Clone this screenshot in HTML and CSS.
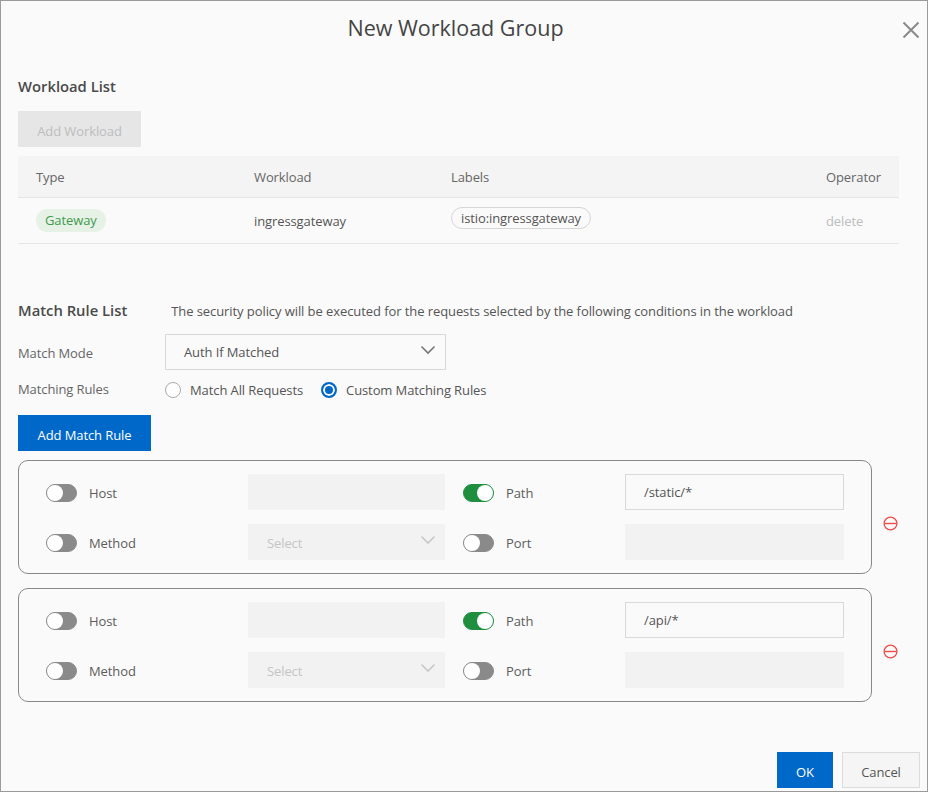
FILE: index.html
```html
<!DOCTYPE html>
<html lang="en">
<head>
    <meta charset="UTF-8">
    <title>New Workload Group</title>
    <link rel="stylesheet" href="styles.css">
</head>
<body>
    <div class="dialog">
        <div class="dialog-header">
            <div class="dialog-title">New Workload Group</div>
            <svg class="close-icon" width="18" height="18" viewBox="0 0 18 18"><path d="M1.5 1.5L16.5 16.5M16.5 1.5L1.5 16.5" stroke="#8a8a8a" stroke-width="2" fill="none"/></svg>
        </div>

        <div class="section-title workload-title">Workload List</div>
        <button class="btn btn-disabled add-workload">Add Workload</button>

        <div class="table-row table-head">
            <div>Type</div>
            <div>Workload</div>
            <div>Labels</div>
            <div>Operator</div>
        </div>
        <div class="table-row table-body">
            <div><span class="tag-green">Gateway</span></div>
            <div>ingressgateway</div>
            <div><span class="tag-label">istio:ingressgateway</span></div>
            <div class="delete-link">delete</div>
        </div>

        <div class="match-head">
            <div class="section-title">Match Rule List</div>
            <div class="match-desc">The security policy will be executed for the requests selected by the following conditions in the workload</div>
        </div>

        <div class="form-row mode-row">
            <div class="form-label">Match Mode</div>
            <div class="field select-field mode-select">
                <span>Auth If Matched</span>
                <svg class="chevron" width="16" height="10" viewBox="0 0 16 10"><path d="M1.5 1.5L8 8L14.5 1.5" stroke="#777" stroke-width="1.6" fill="none"/></svg>
            </div>
        </div>

        <div class="form-row radio-row">
            <div class="form-label">Matching Rules</div>
            <div class="radio-item"><span class="radio"></span>Match All Requests</div>
            <div class="radio-item"><span class="radio radio-on"></span>Custom Matching Rules</div>
        </div>

        <button class="btn btn-primary add-rule">Add Match Rule</button>

        <div class="rule-wrap">
            <div class="rule-card">
                <div class="rule-cell"><span class="toggle"></span>Host</div>
                <div class="field field-off"></div>
                <div class="rule-cell"><span class="toggle toggle-on"></span>Path</div>
                <div class="field">/static/*</div>
                <div class="rule-cell"><span class="toggle"></span>Method</div>
                <div class="field field-off select-field">
                    <span>Select</span>
                    <svg class="chevron" width="16" height="10" viewBox="0 0 16 10"><path d="M1.5 1.5L8 8L14.5 1.5" stroke="#c8c8c8" stroke-width="1.6" fill="none"/></svg>
                </div>
                <div class="rule-cell"><span class="toggle"></span>Port</div>
                <div class="field field-off"></div>
            </div>
            <svg class="remove-icon" width="15" height="15" viewBox="0 0 15 15"><circle cx="7.5" cy="7.5" r="6.4" stroke="#f04a4a" stroke-width="1.3" fill="none"/><path d="M1.5 7.5H13.5" stroke="#f04a4a" stroke-width="1.4"/></svg>
        </div>

        <div class="rule-wrap">
            <div class="rule-card">
                <div class="rule-cell"><span class="toggle"></span>Host</div>
                <div class="field field-off"></div>
                <div class="rule-cell"><span class="toggle toggle-on"></span>Path</div>
                <div class="field">/api/*</div>
                <div class="rule-cell"><span class="toggle"></span>Method</div>
                <div class="field field-off select-field">
                    <span>Select</span>
                    <svg class="chevron" width="16" height="10" viewBox="0 0 16 10"><path d="M1.5 1.5L8 8L14.5 1.5" stroke="#c8c8c8" stroke-width="1.6" fill="none"/></svg>
                </div>
                <div class="rule-cell"><span class="toggle"></span>Port</div>
                <div class="field field-off"></div>
            </div>
            <svg class="remove-icon" width="15" height="15" viewBox="0 0 15 15"><circle cx="7.5" cy="7.5" r="6.4" stroke="#f04a4a" stroke-width="1.3" fill="none"/><path d="M1.5 7.5H13.5" stroke="#f04a4a" stroke-width="1.4"/></svg>
        </div>

        <div class="dialog-footer">
            <button class="btn btn-primary btn-ok">OK</button>
            <button class="btn btn-cancel">Cancel</button>
        </div>
    </div>
</body>
</html>
```
FILE: styles.css
```css
html, body {
    margin: 0;
    padding: 0;
}

body {
    font-family: "Open Sans", "Noto Sans", sans-serif;
    font-size: 13px;
    letter-spacing: -0.1px;
    color: #555;
    background-color: #fafafa;
}

.dialog {
    box-sizing: border-box;
    width: 928px;
    height: 792px;
    padding: 0 7px 0 17px;
    background-color: #fafafa;
    border: 1px solid #9a9a9a;
    display: flex;
    flex-direction: column;
    align-items: flex-start;
    overflow: hidden;
}

.dialog-header {
    position: relative;
    width: 909px;
    height: 54px;
    margin-left: -17px;
    text-align: center;
}

.dialog-title {
    font-size: 21.5px;
    line-height: 54px;
    letter-spacing: 0;
    color: #444;
}

.close-icon {
    position: absolute;
    top: 20px;
    right: -10px;
}

.section-title {
    font-size: 14.8px;
    font-weight: 600;
    letter-spacing: 0;
    color: #4a4a4a;
}

.workload-title {
    margin-top: 20px;
    line-height: 22px;
}

.btn {
    box-sizing: border-box;
    height: 36px;
    padding: 4px 0 0;
    border: none;
    font-family: inherit;
    font-size: 13px;
    letter-spacing: -0.1px;
}

.btn-disabled {
    background-color: #e6e6e6;
    color: #bdbdbd;
}

.btn-primary {
    background-color: #0068c8;
    color: #fff;
}

.add-workload {
    width: 123px;
    margin-top: 14px;
}

.table-row {
    display: grid;
    grid-template-columns: 218px 197px 375px 91px;
    width: 881px;
    padding-left: 18px;
    box-sizing: border-box;
    align-items: center;
    border-bottom: 1px solid #e6e6e6;
}

.table-head {
    height: 42px;
    margin-top: 9px;
    background-color: #f4f4f4;
    color: #666;
}

.table-body {
    height: 46px;
}

.tag-green {
    display: inline-block;
    padding: 0 9px;
    line-height: 23px;
    border-radius: 12px;
    background-color: #e6f2e6;
    color: #3f9a4d;
}

.tag-label {
    display: inline-block;
    position: relative;
    top: -3px;
    padding: 0 9px;
    line-height: 20px;
    border: 1px solid #d6d6d6;
    border-radius: 11px;
}

.delete-link {
    color: #bdbdbd;
}

.match-head {
    display: flex;
    align-items: center;
    margin-top: 56px;
    height: 22px;
}

.match-head .section-title {
    padding-bottom: 2px;
}

.match-desc {
    margin-left: 44px;
    letter-spacing: -0.08px;
}

.form-row {
    display: flex;
    align-items: center;
}

.form-label {
    width: 147px;
    color: #666;
}

.mode-row {
    margin-top: 12px;
}

.mode-row .form-label {
    padding-top: 2px;
}

.field {
    box-sizing: border-box;
    height: 36px;
    padding: 0 18px;
    line-height: 34px;
    background-color: #fafafa;
    border: 1px solid #d9d9d9;
}

.field-off {
    background-color: #f2f2f2;
    border-color: #f2f2f2;
    color: #c4c4c4;
}

.select-field {
    display: flex;
    align-items: center;
    justify-content: space-between;
}

.mode-select {
    width: 281px;
    padding-right: 9px;
}

.rule-card .select-field {
    padding-top: 2px;
    padding-right: 8px;
}

.chevron {
    margin-top: -4px;
}

.rule-card .chevron {
    margin-top: -6px;
}

.radio-row {
    margin-top: 9px;
    height: 22px;
}

.radio-row .form-label {
    padding-bottom: 2px;
}

.radio-item {
    display: flex;
    align-items: center;
    margin-right: 18px;
}

.radio {
    box-sizing: border-box;
    width: 16px;
    height: 16px;
    margin-right: 9px;
    border: 1px solid #aaa;
    border-radius: 50%;
    background-color: #fff;
}

.radio-on {
    border: 2px solid #0068c8;
    box-shadow: inset 0 0 0 2px #fff;
    background-color: #0068c8;
}

.add-rule {
    width: 133px;
    margin-top: 14px;
}

.rule-wrap {
    display: flex;
    align-items: center;
    margin-top: 9px;
}

.rule-wrap + .rule-wrap {
    margin-top: 14px;
}

.rule-card {
    box-sizing: border-box;
    width: 854px;
    height: 114px;
    padding: 13px 27px;
    display: grid;
    grid-template-columns: 202px 197px 18px 162px 219px;
    grid-template-rows: 36px 36px;
    row-gap: 14px;
    align-items: center;
    border: 1px solid #888;
    border-radius: 10px;
}

.rule-card .rule-cell:nth-child(3) {
    grid-column: 4;
}

.rule-card .rule-cell:nth-child(7) {
    grid-column: 4;
}

.rule-cell {
    display: flex;
    align-items: center;
    padding-top: 2px;
    color: #5c5c5c;
}

.toggle {
    box-sizing: border-box;
    position: relative;
    width: 31px;
    height: 18px;
    margin-right: 12px;
    border: 1px solid #8a8a8a;
    border-radius: 9px;
    background-color: #8a8a8a;
}

.toggle::after {
    content: "";
    position: absolute;
    top: 0;
    left: 0;
    width: 16px;
    height: 16px;
    border-radius: 50%;
    background-color: #fff;
}

.toggle-on {
    border-color: #1f8f3f;
    background-color: #1f8f3f;
}

.toggle-on::after {
    left: 13px;
}

.remove-icon {
    margin-left: 11px;
    margin-top: 12px;
}

.dialog-footer {
    display: flex;
    justify-content: flex-end;
    gap: 9px;
    width: 902px;
    margin-top: auto;
    margin-bottom: 3px;
}

.btn-ok {
    width: 56px;
}

.btn-cancel {
    width: 78px;
    border: 1px solid #dcdcdc;
    background-color: #f5f5f5;
    color: #555;
}
```
